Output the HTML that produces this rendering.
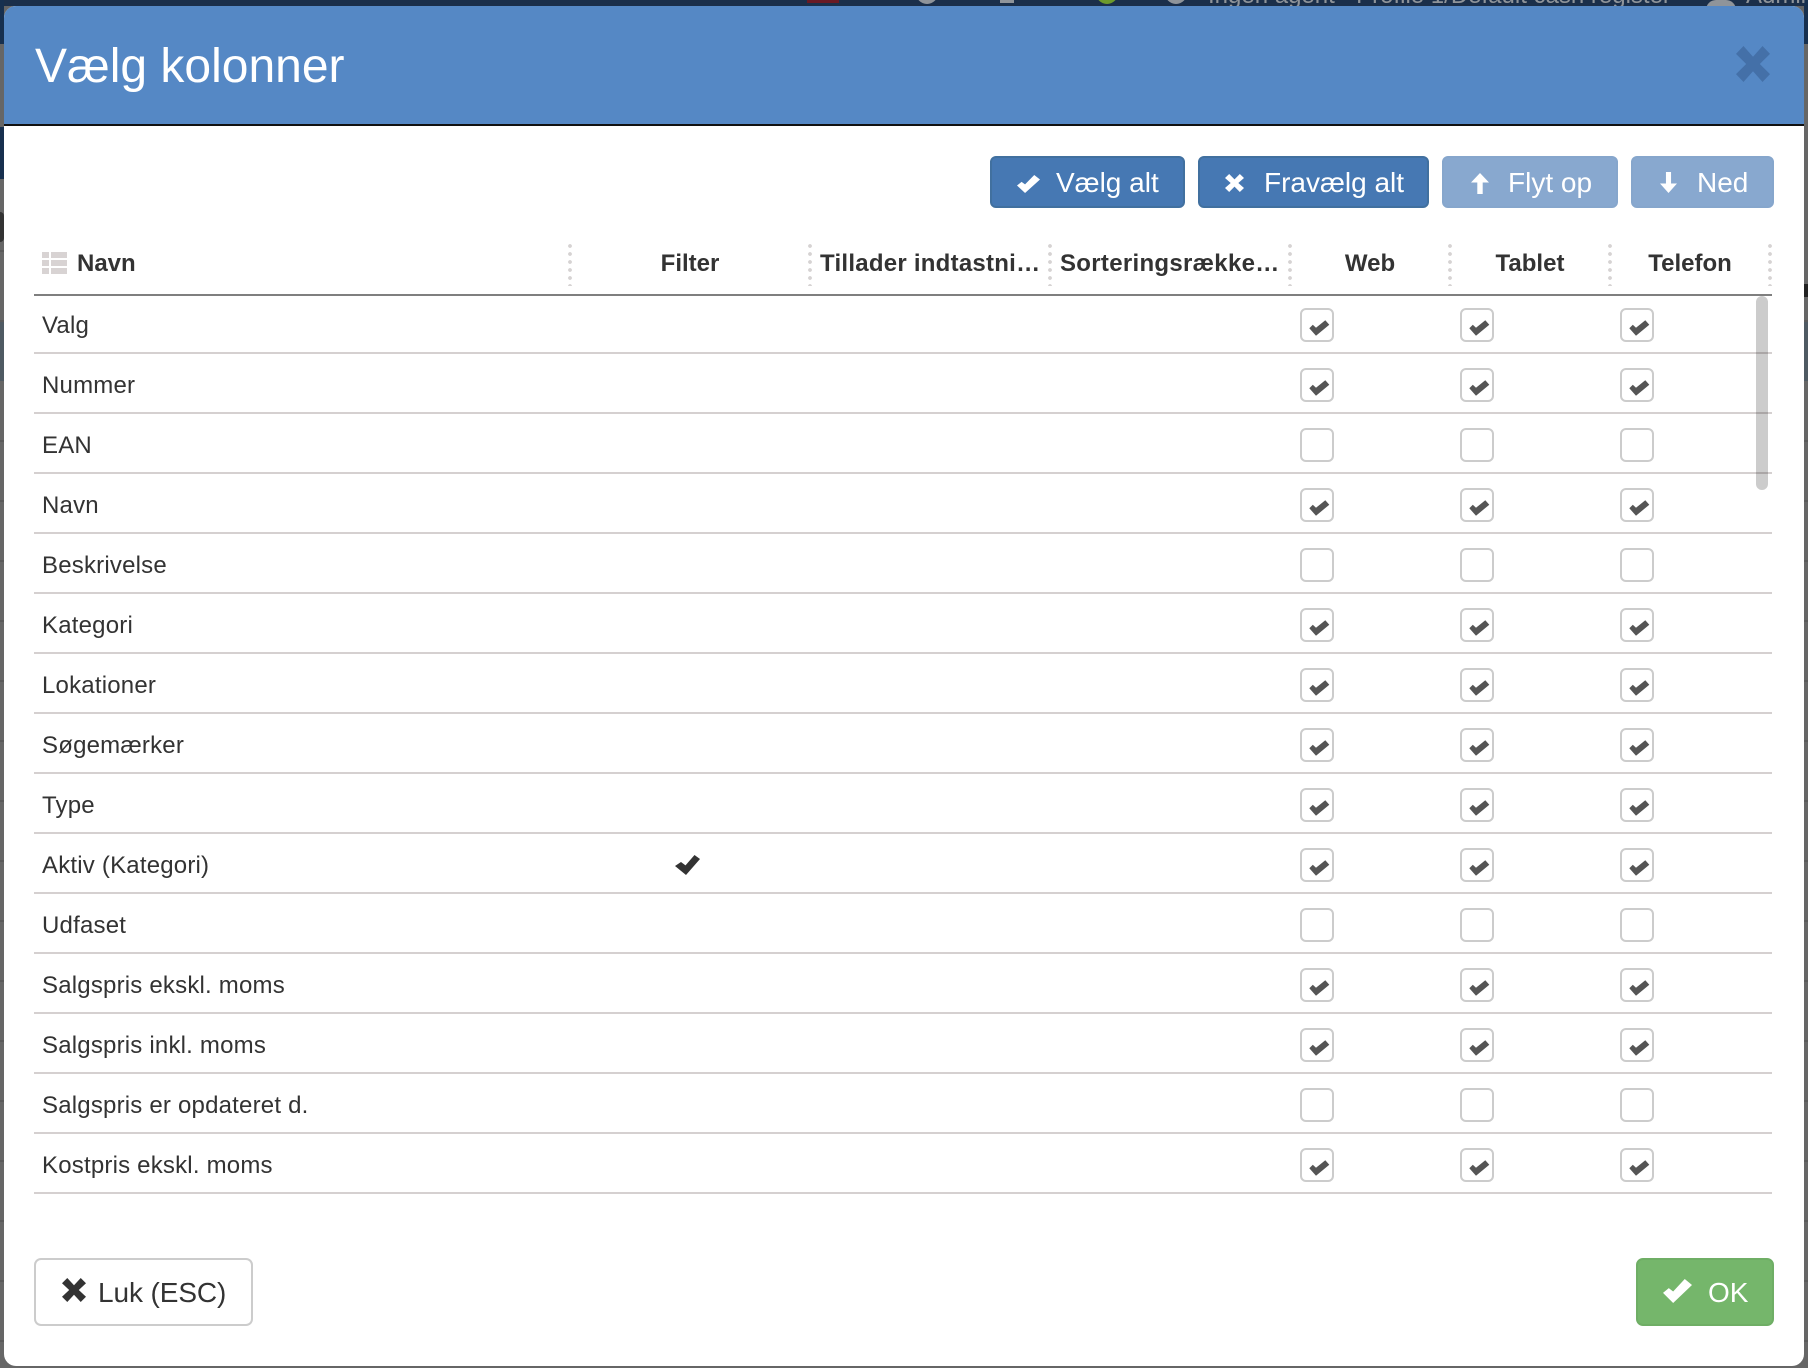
<!DOCTYPE html>
<html lang="da">
<head>
<meta charset="utf-8">
<title>Vælg kolonner</title>
<style>
html,body{margin:0;padding:0}
body{width:1808px;height:1368px;position:relative;overflow:hidden;background:#666;font-family:"Liberation Sans",sans-serif;color:#333}
div,span{position:absolute;box-sizing:border-box}
.t{white-space:nowrap}
.bg{background:#5a5a5a;height:2px}
#modal{left:4px;top:6px;width:1800px;height:1360px;background:#fff;border-radius:12px;overflow:hidden}
#head{left:0;top:0;width:1800px;height:120px;background:#5588c5;border-bottom:2px solid #111}
.btn{top:156px;height:52px;border-radius:6px;border:2px solid #41709f;background:#4678b3}
.btn.l{background:#88a8cf;border-color:#86a6cc}
.bt{top:167px;font-size:28px;line-height:32px;color:#fff;white-space:nowrap}
.h{top:250px;font-size:24px;line-height:28px;font-weight:bold;white-space:nowrap}
.c{text-align:center;transform:translateX(-50%)}
.d{top:243px;width:4px;height:43px;background:radial-gradient(circle at 2px 3px,#d6d3d3 1.7px,transparent 2.1px) 0 0/4px 8px repeat-y}
.r{left:34px;width:1738px;height:60px;border-bottom:2px solid #d5d0d0}
.n{left:8px;top:18px;font-size:24px;line-height:28px;letter-spacing:.2px;white-space:nowrap}
.cb{top:14px;width:34px;height:34px;border:2px solid #ccc;border-radius:6px;background:#fff}
.a{left:1266px}.b{left:1426px}.e{left:1586px}
.on::after{content:"";position:absolute;left:-2px;top:-2px;width:34px;height:34px;background:#555;clip-path:polygon(9.3px 20.3px,12.8px 16.8px,16px 19.7px,25.3px 12.2px,29.3px 16.7px,16px 27.7px)}
.i{background:#fff}
.x{clip-path:polygon(0 22%,22% 0,50% 30%,78% 0,100% 22%,70% 50%,100% 78%,78% 100%,50% 70%,22% 100%,0 78%,30% 50%)}
.k{clip-path:polygon(0 58%,20% 38%,35% 52%,75% 0,100% 25%,35% 100%)}
.up{clip-path:polygon(50% 0,100% 45%,65% 45%,65% 100%,35% 100%,35% 45%,0 45%)}
.dn{clip-path:polygon(35% 0,65% 0,65% 55%,100% 55%,50% 100%,0 55%,35% 55%)}
</style>
</head>
<body>
<!-- backdrop -->
<div style="left:0;top:0;width:1808px;height:6px;background:#1b2f4a"></div>
<div style="left:0;top:0;width:4px;height:44px;background:#17304f"></div>
<div style="left:0;top:127px;width:4px;height:52px;background:#17304f"></div>
<div style="left:0;top:320px;width:4px;height:61px;background:#4f5a63"></div>
<div style="left:1804px;top:0;width:4px;height:44px;background:#17304f"></div>
<div style="left:1804px;top:320px;width:4px;height:61px;background:#4f5a63"></div>
<div style="left:0;top:212px;width:4px;height:30px;background:#333;border-radius:0 8px 8px 0"></div>
<div style="left:1804px;top:284px;width:4px;height:13px;background:#222"></div>
<div class="bg" style="left:0;top:250px;width:4px"></div>
<div class="bg" style="left:0;top:320px;width:4px"></div>
<div class="bg" style="left:1804px;top:320px;width:4px"></div>
<div class="bg" style="left:0;top:440px;width:1808px"></div>
<div class="bg" style="left:0;top:500px;width:1808px"></div>
<div class="bg" style="left:0;top:560px;width:1808px"></div>
<div class="bg" style="left:0;top:620px;width:1808px"></div>
<div class="bg" style="left:0;top:680px;width:1808px"></div>
<div class="bg" style="left:0;top:740px;width:1808px"></div>
<div class="bg" style="left:0;top:800px;width:1808px"></div>
<div class="bg" style="left:0;top:860px;width:1808px"></div>
<div class="bg" style="left:0;top:920px;width:1808px"></div>
<div class="bg" style="left:0;top:980px;width:1808px"></div>
<div class="bg" style="left:0;top:1040px;width:1808px"></div>
<div class="bg" style="left:0;top:1100px;width:1808px"></div>
<div class="bg" style="left:0;top:1160px;width:1808px"></div>
<div class="bg" style="left:0;top:1220px;width:1808px"></div>
<div class="bg" style="left:0;top:1280px;width:1808px"></div>
<div class="bg" style="left:0;top:1340px;width:1808px"></div>
<div style="left:807px;top:0;width:32px;height:3px;background:#6a1a24"></div>
<div style="left:916px;top:-18px;width:22px;height:22px;border-radius:50%;background:#8f949a"></div>
<div style="left:1000px;top:0;width:14px;height:3px;background:#8f949a"></div>
<div style="left:1096px;top:-18px;width:22px;height:22px;border-radius:50%;background:#6d9a2c"></div>
<div style="left:1165px;top:-18px;width:22px;height:22px;border-radius:50%;background:#8f949a"></div>
<div class="t" style="left:1208px;top:-18px;font-size:24px;line-height:28px;color:#8f949a">Ingen agent · Profile 1/Default cash register</div>
<div style="left:1706px;top:0;width:30px;height:12px;border-radius:10px 10px 0 0;background:#8f949a"></div>
<div class="t" style="left:1746px;top:-18px;font-size:24px;line-height:28px;color:#8f949a">Admin</div>

<!-- modal -->
<div id="modal"><div id="head"></div></div>
<div class="t" style="left:35px;top:40px;font-size:48px;line-height:54px;color:#fff">Vælg kolonner</div>
<div class="x" style="left:1736px;top:46px;width:34px;height:36px;background:#4470a8"></div>

<!-- toolbar -->
<div class="btn" style="left:990px;width:195px"></div>
<div class="i k" style="left:1017px;top:175px;width:23px;height:18px"></div>
<div class="bt" style="left:1056px">Vælg alt</div>
<div class="btn" style="left:1198px;width:231px"></div>
<div class="i x" style="left:1225px;top:174px;width:19px;height:18px"></div>
<div class="bt" style="left:1264px">Fravælg alt</div>
<div class="btn l" style="left:1442px;width:176px"></div>
<div class="i up" style="left:1471px;top:173px;width:18px;height:21px"></div>
<div class="bt" style="left:1508px">Flyt op</div>
<div class="btn l" style="left:1631px;width:143px"></div>
<div class="i dn" style="left:1660px;top:172px;width:17px;height:21px"></div>
<div class="bt" style="left:1697px">Ned</div>

<!-- table header -->
<div style="left:42px;top:252px;width:7px;height:6px;background:#d8d3d3"></div>
<div style="left:51px;top:252px;width:16px;height:6px;background:#d8d3d3"></div>
<div style="left:42px;top:260px;width:7px;height:6px;background:#d8d3d3"></div>
<div style="left:51px;top:260px;width:16px;height:6px;background:#d8d3d3"></div>
<div style="left:42px;top:268px;width:7px;height:6px;background:#d8d3d3"></div>
<div style="left:51px;top:268px;width:16px;height:6px;background:#d8d3d3"></div>
<div class="h" style="left:77px">Navn</div>
<div class="h c" style="left:690px">Filter</div>
<div class="h" style="left:820px;letter-spacing:.25px">Tillader indtastni…</div>
<div class="h" style="left:1060px;letter-spacing:.3px">Sorteringsrække…</div>
<div class="h c" style="left:1370px">Web</div>
<div class="h c" style="left:1530px">Tablet</div>
<div class="h c" style="left:1690px">Telefon</div>
<div class="d" style="left:568px"></div>
<div class="d" style="left:808px"></div>
<div class="d" style="left:1048px"></div>
<div class="d" style="left:1288px"></div>
<div class="d" style="left:1448px"></div>
<div class="d" style="left:1608px"></div>
<div class="d" style="left:1768px"></div>
<div style="left:34px;top:294px;width:1738px;height:2px;background:#7f7f7f"></div>

<!-- rows -->
<div class="r" style="top:294px"><div class="n">Valg</div><div class="cb a on"></div><div class="cb b on"></div><div class="cb e on"></div></div>
<div class="r" style="top:354px"><div class="n">Nummer</div><div class="cb a on"></div><div class="cb b on"></div><div class="cb e on"></div></div>
<div class="r" style="top:414px"><div class="n">EAN</div><div class="cb a"></div><div class="cb b"></div><div class="cb e"></div></div>
<div class="r" style="top:474px"><div class="n">Navn</div><div class="cb a on"></div><div class="cb b on"></div><div class="cb e on"></div></div>
<div class="r" style="top:534px"><div class="n">Beskrivelse</div><div class="cb a"></div><div class="cb b"></div><div class="cb e"></div></div>
<div class="r" style="top:594px"><div class="n">Kategori</div><div class="cb a on"></div><div class="cb b on"></div><div class="cb e on"></div></div>
<div class="r" style="top:654px"><div class="n">Lokationer</div><div class="cb a on"></div><div class="cb b on"></div><div class="cb e on"></div></div>
<div class="r" style="top:714px"><div class="n">Søgemærker</div><div class="cb a on"></div><div class="cb b on"></div><div class="cb e on"></div></div>
<div class="r" style="top:774px"><div class="n">Type</div><div class="cb a on"></div><div class="cb b on"></div><div class="cb e on"></div></div>
<div class="r" style="top:834px"><div class="n">Aktiv (Kategori)</div><div class="cb a on"></div><div class="cb b on"></div><div class="cb e on"></div></div>
<div class="r" style="top:894px"><div class="n">Udfaset</div><div class="cb a"></div><div class="cb b"></div><div class="cb e"></div></div>
<div class="r" style="top:954px"><div class="n">Salgspris ekskl. moms</div><div class="cb a on"></div><div class="cb b on"></div><div class="cb e on"></div></div>
<div class="r" style="top:1014px"><div class="n">Salgspris inkl. moms</div><div class="cb a on"></div><div class="cb b on"></div><div class="cb e on"></div></div>
<div class="r" style="top:1074px"><div class="n">Salgspris er opdateret d.</div><div class="cb a"></div><div class="cb b"></div><div class="cb e"></div></div>
<div class="r" style="top:1134px"><div class="n">Kostpris ekskl. moms</div><div class="cb a on"></div><div class="cb b on"></div><div class="cb e on"></div></div>
<div style="left:675px;top:855px;width:25px;height:20px;background:#333;clip-path:polygon(0 55%,24% 35%,42% 52%,78% 0,100% 20%,44% 100%)"></div>

<!-- scrollbar -->
<div style="left:1756px;top:296px;width:12px;height:194px;border-radius:6px;background:rgba(0,0,0,.2)"></div>

<!-- footer -->
<div style="left:34px;top:1258px;width:219px;height:68px;border:2px solid #ccc;border-radius:7px;background:#fff"></div>
<div class="x" style="left:62px;top:1278px;width:24px;height:24px;background:#333"></div>
<div class="t" style="left:98px;top:1277px;font-size:28px;line-height:32px;letter-spacing:-.1px;color:#333">Luk (ESC)</div>
<div style="left:1636px;top:1258px;width:138px;height:68px;border:2px solid #6fae65;border-radius:7px;background:#75b66b"></div>
<div class="i k" style="left:1663px;top:1279px;width:29px;height:24px"></div>
<div class="t" style="left:1708px;top:1277px;font-size:28px;line-height:32px;color:#fff">OK</div>
</body>
</html>
